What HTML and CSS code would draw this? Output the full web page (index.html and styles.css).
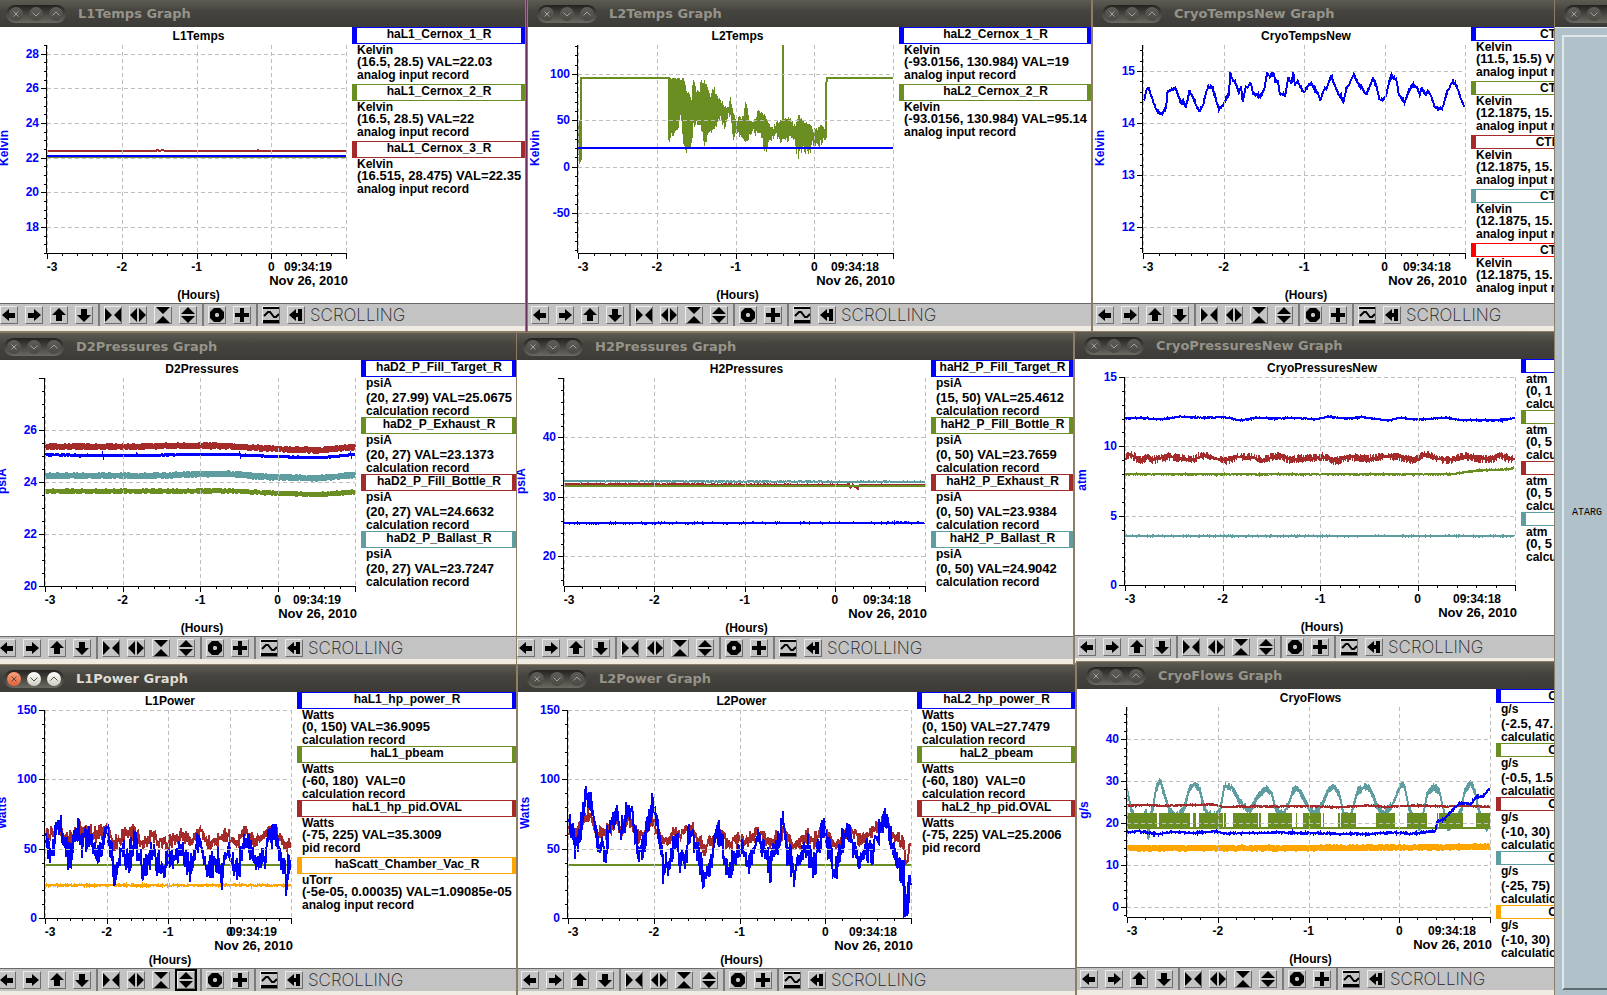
FILE: index.html
```html
<!DOCTYPE html>
<html lang="en">
<head>
    <meta charset="UTF-8">
    <meta name="viewport" content="width=device-width, initial-scale=1.0">
    <title>Target Graphs</title>
    <link rel="stylesheet" href="styles.css">
</head>
<body>
    <svg class="sprite" aria-hidden="true">
        <symbol id="left" viewBox="0 0 16 16"><path d="M1 8L8 2V6H14V11H8V14Z"/></symbol>
        <symbol id="right" viewBox="0 0 16 16"><path d="M15 8L8 2V6H2V11H8V14Z"/></symbol>
        <symbol id="up" viewBox="0 0 16 16"><path d="M8 1L15 8H11V14H5V8H1Z"/></symbol>
        <symbol id="down" viewBox="0 0 16 16"><path d="M8 15L15 8H11V2H5V8H1Z"/></symbol>
        <symbol id="squeeze-x" viewBox="0 0 16 16"><path d="M0 1L7 8L0 15ZM16 1L9 8L16 15Z"/></symbol>
        <symbol id="spread-x" viewBox="0 0 16 16"><path d="M7 1V15L0 8ZM9 1V15L16 8Z"/></symbol>
        <symbol id="squeeze-y" viewBox="0 0 16 16"><path d="M1 0H15L8 7ZM8 9L15 16H1Z"/></symbol>
        <symbol id="spread-y" viewBox="0 0 16 16"><path d="M8 0L15 7H1ZM1 9H15L8 16Z"/></symbol>
        <symbol id="ring" viewBox="0 0 16 16"><path fill-rule="evenodd" d="M5 1H11L15 5V11L11 15H5L1 11V5ZM7 6L6 7V9L7 10H9L10 9V7L9 6Z"/></symbol>
        <symbol id="plus" viewBox="0 0 16 16"><path d="M6 1H10V6H15V10H10V15H6V10H1V6H6Z"/></symbol>
        <symbol id="wave" viewBox="0 0 16 16"><path d="M0 0H16V2H0ZM0 13H16V16H0Z"/><path d="M1 9L5 5H7L11 10H13L16 7" fill="none" stroke="#000" stroke-width="2"/></symbol>
        <symbol id="end" viewBox="0 0 16 16"><path d="M1 8L8 2V6H10V2H14V14H10V10H8V14Z"/></symbol>
        <symbol id="close" viewBox="0 0 14 14"><path d="M4.500 4.500L9.500 9.500M9.500 4.500L4.500 9.500"/></symbol>
        <symbol id="minimize" viewBox="0 0 14 14"><path d="M3.500 5.500L7 9L10.500 5.500"/></symbol>
        <symbol id="maximize" viewBox="0 0 14 14"><path d="M3.500 8.500L7 5L10.500 8.500"/></symbol>
    </svg>

    <main class="desktop" id="desktop">
        <section class="window panel">
            <header class="titlebar">
                <div class="controls">
                    <button type="button" aria-label="Close"><svg><use href="#close"/></svg></button>
                    <button type="button" aria-label="Minimize"><svg><use href="#minimize"/></svg></button>
                    <button type="button" aria-label="Maximize"><svg><use href="#maximize"/></svg></button>
                </div>
            </header>
            <div class="panel-body">
                <div class="panel-frame">ATARG</div>
            </div>
        </section>
    </main>

    <script src="graphs.js"></script>
</body>
</html>
```
FILE: styles.css
```css
*{
    margin: 0;
    padding: 0;
    box-sizing: border-box;
}

body{
    overflow: hidden;
    background-color: #6b2f5b;
    font-family: "Liberation Sans", Arial, sans-serif;
    font-size: 12px;
    color: #000;
}

.sprite{
    display: none;
}

.desktop{
    position: relative;
    height: 100vh;
    overflow: hidden;
    background: linear-gradient(90deg, #6b2f5b 50%, #c98a96 68%);
}

/* windows */
.window{
    position: absolute;
    background-color: #efebe3;
    padding-bottom: 5px;
    box-shadow: 0 0 0 1px #8b7d66;
}

.l1temps{ left: -3px; top: 0; width: 528px; }
.l2temps{ left: 528px; top: 0; width: 563px; }
.cryotemps{ left: 1093px; top: 0; width: 531px; }
.d2pressures{ left: -5px; top: 333px; width: 521px; z-index: 2; }
.h2pressures{ left: 514px; top: 333px; width: 559px; }
.cryopressures{ left: 1075px; top: 332px; width: 545px; z-index: 2; }
.l1power{ left: -5px; top: 665px; width: 521px; z-index: 3; }
.l2power{ left: 518px; top: 665px; width: 557px; z-index: 2; }
.cryoflows{ left: 1077px; top: 662px; width: 531px; z-index: 2; }

.titlebar{
    display: flex;
    align-items: center;
    gap: 12px;
    height: 27px;
    padding-left: 9px;
    background: linear-gradient(#5d5b53, #45443f 40%, #3c3b37);
}

.titlebar h2{
    font-family: "DejaVu Sans", sans-serif;
    font-size: 13px;
    line-height: 16px;
    color: #969389;
    white-space: nowrap;
}

.controls{
    display: flex;
    gap: 6px;
    padding: 2px 3px;
    border-radius: 9px;
    background: linear-gradient(#23221f, #6a6962);
}

.controls button{
    width: 14px;
    height: 14px;
    border: 0;
    border-radius: 50%;
    background: linear-gradient(#5e5d57, #4a4944);
}

.controls svg{
    display: block;
    width: 14px;
    height: 14px;
    fill: none;
    stroke: #a3a199;
}

.active .titlebar h2{
    color: #dfdbd2;
}

.active .controls button{
    background: linear-gradient(#fff, #cfcbc2);
}

.active .controls button:first-child{
    background: linear-gradient(#f9a07c, #e2603a);
}

.active .controls svg{
    stroke: #5a4a40;
}

.content{
    display: flex;
    height: 276px;
    background-color: #fff;
}

.cryoflows .content{
    height: 278px;
}

/* chart */
.chart{
    flex: 1;
    min-width: 0;
    height: 100%;
}

.chart text{
    font-size: 12px;
    font-weight: bold;
    text-anchor: middle;
}

.chart .tick-y{
    fill: #0000ff;
    text-anchor: end;
}

.chart .unit{
    fill: #0000ff;
}

.chart .date{
    font-size: 13px;
    text-anchor: end;
}

.chart path{
    fill: none;
    stroke: #000;
    shape-rendering: crispEdges;
}

.chart .grid{
    stroke: #bebebe;
    stroke-dasharray: 4 3;
}

.chart .blue{ stroke: #0000ff; }
.chart .green{ stroke: #6b8e23; }
.chart .brown{ stroke: #a52a2a; }
.chart .teal{ stroke: #5f9ea0; }
.chart .orange{ stroke: #ffa500; }

/* legend */
.legend{
    flex: none;
    overflow: hidden;
    list-style: none;
    font-weight: bold;
    white-space: nowrap;
}

.l1temps .legend{ width: 173px; }
.l2temps .legend{ width: 192px; }
.cryotemps .legend{ width: 153px; }
.d2pressures .legend{ width: 155px; }
.h2pressures .legend{ width: 142px; }
.cryopressures .legend{ width: 99px; }
.l1power .legend{ width: 219px; }
.l2power .legend{ width: 158px; }
.cryoflows .legend{ width: 112px; }

.legend li{
    margin-bottom: 1px;
}

.legend h3{
    display: flex;
    justify-content: center;
    height: 17px;
    border: solid;
    border-width: 1px 4px 1px 5px;
    font-size: 12px;
    line-height: 12px;
}

.legend h3 span{
    color: #000;
}

.cryo .legend h3{
    height: 14px;
}

.legend p{
    height: 11px;
    padding-left: 5px;
    line-height: 12px;
}

.legend p.deep{
    height: 14px;
    line-height: 13px;
}

.legend .range{
    font-size: 13px;
    white-space: pre;
}

.legend .blue{ border-color: #0000ff; }
.legend .green{ border-color: #6b8e23; }
.legend .brown{ border-color: #a52a2a; }
.legend .teal{ border-color: #5f9ea0; }
.legend .orange{ border-color: #ffa500; }
.legend .red{ border-color: #ff0000; }

/* toolbar */
.toolbar{
    display: flex;
    align-items: center;
    height: 23px;
    border-top: 1px solid #696969;
    background-color: #c3c3c3;
}

.group{
    display: flex;
    align-items: center;
    gap: 7px;
    height: 22px;
    padding: 0 5px 0 4px;
    border-right: 2px solid #7a7a7a;
}

.group:first-child{
    padding-left: 3px;
}

.group:last-of-type{
    border-right: 0;
}

.group button{
    width: 18px;
    height: 18px;
    border: 1px solid;
    border-color: #ececec #6e6e6e #6e6e6e #ececec;
    background-color: #c3c3c3;
}

.group svg{
    display: block;
    width: 16px;
    height: 16px;
}

.active .spread-y{
    outline: 2px solid #000;
}

.mode{
    font-family: Inter, "Liberation Sans", sans-serif;
    font-size: 17px;
    font-weight: 200;
    color: #222;
}

/* target panel */
.panel{
    left: 1555px;
    right: -50px;
    top: 0;
    bottom: -4px;
    z-index: 5;
    display: flex;
    flex-direction: column;
    padding: 0;
    background-color: #b0c1c9;
}

.panel-body{
    flex: 1;
    display: flex;
    padding: 7px 0 9px 7px;
    border-top: 1px solid #e3eaee;
}

.panel-frame{
    flex: 1;
    display: flex;
    align-items: center;
    padding-left: 8px;
    border: solid;
    border-width: 2px 0 2px 2px;
    border-color: #dfe8ed #dfe8ed #5e6b70 #dfe8ed;
    font-family: "Liberation Mono", monospace;
    font-size: 10px;
}
```
FILE: graphs.js
```js
const tools = [
    ['left', 'right', 'up', 'down'],
    ['squeeze-x', 'spread-x', 'squeeze-y', 'spread-y'],
    ['ring', 'plus'],
    ['wave', 'end']
]

// box is the x, y, width, height that the trace points are recorded in
// a trace is color, line width, noise, points and, for a solid band, 'dense'
const graphs = [
    {
        id: 'l1temps', title: 'L1Temps', unit: 'Kelvin', time: '09:34:19',
        min: 16.5, max: 28.5, step: 2, minor: 4, labels: [28, 26, 24, 22, 20, 18],
        box: [140, 135, 886, 624],
        legend: [
            ['blue', 'haL1_Cernox_1_R', 'Kelvin', '(16.5, 28.5) VAL=22.03', 'analog input record'],
            ['green', 'haL1_Cernox_2_R', 'Kelvin', '(16.5, 28.5) VAL=22', 'analog input record'],
            ['brown', 'haL1_Cernox_3_R', 'Kelvin', '(16.515, 28.475) VAL=22.35', 'analog input record']
        ],
        traces: [
            ['green', 1, 1, '140,472 1026,472'],
            ['brown', 2, 0, '140,453 464,453 466,450 470,450 472,453 484,450 490,453 762,453 765,450 770,453 1026,453'],
            ['blue', 2, 0, '140,468 1026,468']
        ]
    },
    {
        id: 'l2temps', title: 'L2Temps', unit: 'Kelvin', time: '09:34:18',
        min: -93, max: 131, step: 50, minor: 5, labels: [100, 50, 0, -50],
        box: [159, 135, 859, 624],
        legend: [
            ['blue', 'haL2_Cernox_1_R', 'Kelvin', '(-93.0156, 130.984) VAL=19', 'analog input record'],
            ['green', 'haL2_Cernox_2_R', 'Kelvin', '(-93.0156, 130.984) VAL=95.14', 'analog input record']
        ],
        bands: [
            ['green', 12, '159,400,440 162,365,480 167,370,480 169,300,400 408,236,425 415,234,400 425,234,395 432,236,385 440,235,340 447,234,430 455,270,462 462,285,440 468,300,430 474,240,375 482,270,365 490,270,370 493,240,370 505,245,435 512,262,400 520,285,390 530,265,385 538,290,365 548,300,350 558,320,375 567,325,350 575,295,350 583,340,415 592,360,400 600,350,400 610,350,410 616,305,438 625,350,410 635,370,395 650,335,400 660,338,410 670,345,458 680,370,420 690,385,410 700,370,410 710,365,420 722,360,410 735,355,420 745,370,400 752,375,440 761,348,468 770,360,440 780,370,450 790,375,452 800,390,430 812,385,430 822,380,430 832,385,420', [169, 408]]
        ],
        traces: [
            ['green', 2, 0, '167,480 168,234 408,234 408,420'],
            ['green', 2, 0, '717,400 717,135'],
            ['green', 2, 0, '834,420 835,340 837,234 1018,234'],
            ['blue', 2, 0, '159,443 1018,443']
        ]
    },
    {
        id: 'cryotemps', cryo: true, title: 'CryoTempsNew', unit: 'Kelvin', time: '09:34:18',
        min: 11.5, max: 15.5, step: 1, minor: 5, labels: [15, 14, 13, 12],
        box: [176, 135, 965, 624],
        legend: [
            ['blue', 'CT', 'Kelvin', '(11.5, 15.5) V', 'analog input r'],
            ['green', 'CT', 'Kelvin', '(12.1875, 15.', 'analog input r'],
            ['brown', 'CTD', 'Kelvin', '(12.1875, 15.', 'analog input r'],
            ['teal', 'CT', 'Kelvin', '(12.1875, 15.', 'analog input r'],
            ['red', 'CT', 'Kelvin', '(12.1875, 15.', 'analog input r']
        ],
        traces: [
            ['blue', 2, 5, '178,305 188,265 195,270 205,300 215,325 225,340 235,340 245,320 250,275 262,270 275,265 288,305 298,305 305,320 315,275 325,290 335,315 345,332 355,318 365,280 372,260 385,262 392,290 402,325 415,320 428,290 434,285 437,215 445,240 452,245 463,275 470,262 475,305 483,262 492,262 498,245 506,280 515,285 528,290 540,265 548,218 556,230 567,218 572,245 580,240 586,285 594,280 602,285 612,235 620,250 626,218 632,255 640,245 650,265 660,275 668,262 680,248 690,265 700,280 708,300 718,270 728,260 740,225 750,255 762,285 770,290 776,308 785,270 797,245 808,222 820,250 832,262 844,285 855,260 865,235 875,255 885,300 895,300 905,285 915,240 922,228 935,240 943,285 960,308 973,270 985,255 997,262 1005,285 1012,265 1022,285 1030,275 1040,290 1050,320 1060,325 1072,325 1085,285 1095,260 1105,245 1117,260 1127,290 1138,318']
        ]
    },
    {
        id: 'd2pressures', title: 'D2Pressures', unit: 'psiA', time: '09:34:19',
        min: 20, max: 28, step: 2, minor: 4, labels: [26, 24, 22, 20],
        box: [134, 143, 918, 626],
        legend: [
            ['blue', 'haD2_P_Fill_Target_R', 'psiA', '(20, 27.99) VAL=25.0675', 'calculation record'],
            ['green', 'haD2_P_Exhaust_R', 'psiA', '(20, 27) VAL=23.1373', 'calculation record'],
            ['brown', 'haD2_P_Fill_Bottle_R', 'psiA', '(20, 27) VAL=24.6632', 'calculation record'],
            ['teal', 'haD2_P_Ballast_R', 'psiA', '(20, 27) VAL=23.7247', 'calculation record']
        ],
        traces: [
            ['brown', 2, 9, '134,350 300,350 400,350 500,347 600,347 680,348 740,352 850,358 940,361 1000,355 1052,351', 'dense'],
            ['blue', 2, 4, '134,374 400,377 560,373 690,373 800,379 950,383 1052,373', 'dense'],
            ['teal', 2, 9, '134,437 300,437 440,438 600,432 680,432 780,440 940,445 1052,435', 'dense'],
            ['green', 2, 7, '134,484 300,484 600,483 700,483 780,488 940,494 1052,486', 'dense']
        ]
    },
    {
        id: 'h2pressures', title: 'H2Pressures', unit: 'psiA', time: '09:34:18',
        min: 15, max: 50, step: 10, minor: 5, labels: [40, 30, 20],
        box: [148, 143, 985, 626],
        legend: [
            ['blue', 'haH2_P_Fill_Target_R', 'psiA', '(15, 50) VAL=25.4612', 'calculation record'],
            ['green', 'haH2_P_Fill_Bottle_R', 'psiA', '(0, 50) VAL=23.7659', 'calculation record'],
            ['brown', 'haH2_P_Exhaust_R', 'psiA', '(0, 50) VAL=23.9384', 'calculation record'],
            ['teal', 'haH2_P_Ballast_R', 'psiA', '(0, 50) VAL=24.9042', 'calculation record']
        ],
        traces: [
            ['teal', 2, 1, '148,454 1133,455'],
            ['brown', 2, 1, '148,463 925,464 930,474 936,464 950,477 954,465 1133,465'],
            ['green', 2, 0, '148,468 1133,469'],
            ['blue', 2, 2, '148,580 1133,579']
        ]
    },
    {
        id: 'cryopressures', cryo: true, title: 'CryoPressuresNew', unit: 'atm', time: '09:34:18',
        min: 0, max: 15, step: 5, minor: 5, labels: [15, 10, 5, 0],
        box: [163, 142, 1137, 624],
        legend: [
            ['blue', '', 'atm', '(0, 1', 'calcu'],
            ['green', '', 'atm', '(0, 5', 'calcu'],
            ['brown', '', 'atm', '(0, 5', 'calcu'],
            ['teal', '', 'atm', '(0, 5', 'calcu']
        ],
        traces: [
            ['blue', 2, 2, '163,267 200,264 270,269 320,261 390,264 450,262 500,272 550,264 600,267 650,264 720,269 755,261 810,267 855,262 930,273 965,264 1020,270 1100,264 1140,271 1250,272 1299,266'],
            ['brown', 2, 3, '163,382 178,372 195,385 218,392 228,378 238,392 290,380 320,385 360,390 395,377 430,388 460,392 490,382 530,382 565,392 610,377 640,388 680,388 720,385 750,382 773,394 825,380 870,390 910,380 960,380 1000,392 1042,374 1075,388 1120,390 1150,380 1230,390 1258,376 1280,388 1299,388', 'dense'],
            ['green', 2, 2, '163,434 1110,434 1190,423 1290,418 1299,411'],
            ['teal', 2, 2, '163,619 1299,619']
        ]
    },
    {
        id: 'l1power', active: true, title: 'L1Power', unit: 'Watts', time: '09:34:19',
        min: 0, max: 150, step: 50, minor: 5, labels: [150, 100, 50, 0],
        box: [134, 151, 729, 623],
        legend: [
            ['blue', 'haL1_hp_power_R', 'Watts', '(0, 150) VAL=36.9095', 'calculation record'],
            ['green', 'haL1_pbeam', 'Watts', '(-60, 180)  VAL=0', 'calculation record'],
            ['brown', 'haL1_hp_pid.OVAL', 'Watts', '(-75, 225) VAL=35.3009', 'pid record'],
            ['orange', 'haScatt_Chamber_Vac_R', 'uTorr', '(-5e-05, 0.00035) VAL=1.09085e-05', 'analog input record']
        ],
        traces: [
            ['green', 2, 0, '134,614 863,614'],
            ['orange', 2, 3, '134,676 863,676'],
            ['brown', 2, 30, '134,525 150,528 175,498 197,535 215,535 235,512 265,510 290,530 317,505 338,555 367,525 400,518 425,560 452,525 480,555 515,540 540,525 563,545 592,515 625,555 650,535 678,528 700,550 727,515 755,545 785,520 810,508 830,535 848,558 862,540'],
            ['blue', 2, 55, '134,540 150,580 160,560 175,492 190,535 197,580 212,590 225,530 235,515 245,565 255,530 265,515 278,550 290,590 305,550 317,510 328,560 338,630 345,620 355,600 367,560 380,610 390,570 400,545 412,590 425,640 435,630 452,560 465,600 480,630 500,600 515,605 530,590 540,565 552,610 563,635 575,580 590,540 605,590 620,635 640,590 658,640 668,590 678,560 690,600 705,635 725,540 740,570 755,615 785,590 800,530 815,520 830,590 840,620 848,660 855,620 862,610'],
            ['blue', 2, 0, '338,630 340,678 342,630'],
            ['blue', 2, 0, '656,640 658,690 661,640'],
            ['blue', 2, 0, '847,650 849,707 851,650']
        ]
    },
    {
        id: 'l2power', title: 'L2Power', unit: 'Watts', time: '09:34:18',
        min: 0, max: 150, step: 50, minor: 5, labels: [150, 100, 50, 0],
        box: [159, 151, 936, 623],
        legend: [
            ['blue', 'haL2_hp_power_R', 'Watts', '(0, 150) VAL=27.7479', 'calculation record'],
            ['green', 'haL2_pbeam', 'Watts', '(-60, 180)  VAL=0', 'calculation record'],
            ['brown', 'haL2_hp_pid.OVAL', 'Watts', '(-75, 225) VAL=25.2006', 'pid record']
        ],
        traces: [
            ['green', 2, 0, '159,614 1095,614'],
            ['brown', 2, 30, '159,505 180,528 212,458 242,525 262,525 290,485 305,515 325,472 350,525 370,525 388,475 420,555 450,520 500,508 530,565 555,540 570,508 600,560 630,535 655,540 678,515 710,555 745,515 780,560 812,525 830,550 852,508 870,520 890,565 922,510 955,540 990,520 1030,480 1045,520 1065,550 1076,540'],
            ['brown', 2, 4, '1076,540 1079,608 1086,605 1090,560 1095,552'],
            ['blue', 2, 55, '159,480 170,510 178,570 190,530 200,450 212,410 222,430 232,480 242,570 262,570 275,500 290,460 302,530 315,480 325,435 335,470 352,570 365,570 375,500 388,440 400,480 408,530 420,640 435,610 445,580 455,530 463,590 478,600 488,540 500,520 512,560 525,645 545,640 560,540 575,530 590,620 602,640 615,600 630,560 655,600 668,570 678,520 695,570 710,630 725,570 745,490 758,580 776,640 795,590 812,550 830,630 845,550 852,515 865,530 878,600 888,635 905,560 922,505 938,570 958,600 975,570 990,580 1005,520 1015,480 1030,480 1045,560 1055,590 1065,630 1074,600'],
            ['blue', 2, 0, '388,440 388,400'],
            ['blue', 3, 3, '1075,600 1077,765 1084,765 1086,700 1088,730 1090,645 1094,685']
        ]
    },
    {
        id: 'cryoflows', cryo: true, title: 'CryoFlows', unit: 'g/s', time: '09:34:18',
        min: -2.5, max: 47.7, step: 10, minor: 5, labels: [40, 30, 20, 10, 0],
        box: [167, 141, 1061, 631],
        legend: [
            ['blue', 'C', 'g/s', '(-2.5, 47.', 'calculatio'],
            ['green', 'C', 'g/s', '(-0.5, 1.5', 'calculatio'],
            ['brown', 'C', 'g/s', '(-10, 30)', 'calculatio'],
            ['teal', 'C', 'g/s', '(-25, 75)', 'calculatio'],
            ['orange', 'C', 'g/s', '(-10, 30)', 'calculatio']
        ],
        // beam-on intervals of the valve signal
        pulses: [[167, 254], [260, 350], [359, 368], [377, 447], [451, 455], [477, 550], [554, 558], [578, 648], [660, 665], [681, 733], [739, 744], [784, 788], [791, 835], [896, 951], [985, 1044], [1072, 1076], [1079, 1149], [1186, 1228]],
        traces: [
            ['teal', 2, 3, '167,385 180,450 190,480 215,480 222,450 230,535 236,460 243,450 252,385 264,360 275,400 290,450 310,470 333,450 350,385 364,372 378,385 392,440 405,465 425,465 440,450 452,378 475,384 500,430 525,455 548,410 572,385 590,400 602,450 625,462 640,430 652,395 663,382 675,400 695,440 715,460 735,440 755,390 772,380 790,410 800,465 820,470 840,395 868,378 882,395 900,445 920,462 945,430 968,372 978,380 990,440 1010,490 1025,505 1045,400 1065,380 1080,395 1092,450 1105,510 1125,480 1145,450 1152,400 1172,368 1185,400 1195,450 1215,505 1227,490', 'dense'],
            ['brown', 2, 2, '167,438 220,435 260,438 420,434 450,442 500,440 700,439 780,442 870,437 920,441 1000,437 1100,440 1160,438 1228,441'],
            ['blue', 2, 3, '167,517 200,514 255,524 300,516 360,520 420,515 450,521 600,518 700,520 870,523 940,518 1000,522 1050,516 1068,515 1073,487 1095,477 1115,455 1140,430 1172,432 1188,412 1210,408 1227,385'],
            ['orange', 2, 9, '167,565 700,565 1000,563 1228,561', 'dense']
        ]
    }
]

// small seeded generator, so the noise is the same on every load
let seed = 26112010
function random(){
    seed = (seed * 1103515245 + 12345) % 2147483648
    return seed / 2147483648
}

function parse(text){
    return text.split(' ').map(point => point.split(',').map(Number))
}

class Chart{
    constructor(graph, width, height) {
        this.graph = graph
        this.left = 50
        this.right = width - 6
        this.top = 18
        this.bottom = height - 50
        this.parts = []
    }

    x(value){
        const [x, , w] = this.graph.box
        return this.left + (value - x) / w * (this.right - this.left)
    }

    y(value){
        const [, y, , h] = this.graph.box
        return this.top + (value - y) / h * (this.bottom - this.top)
    }

    level(value){
        const { min, max } = this.graph
        return Math.round(this.bottom - (value - min) / (max - min) * (this.bottom - this.top))
    }

    path(name, d, width = 1){
        this.parts.push(`<path class="${name}" stroke-width="${width}" d="${d}"/>`)
    }

    text(name, x, y, value, extra = ''){
        this.parts.push(`<text class="${name}" x="${x}" y="${y}" ${extra}>${value}</text>`)
    }

    trace([color, width, noise, text, dense]){
        const points = parse(text)
        if(!noise){
            this.path(color, 'M' + points.map(([x, y]) => `${this.x(x).toFixed(1)} ${this.y(y).toFixed(1)}`).join('L'), width)
            return
        }
        const out = []
        let side = 1
        for(let i = 1; i < points.length; i++){
            const [x0, y0] = points[i - 1]
            const [x1, y1] = points[i]
            for(let x = x0; x < x1; x += 1.5){
                const y = y0 + (y1 - y0) * (x - x0) / (x1 - x0)
                side = -side
                const jitter = dense ? side * noise * (0.7 + random() * 0.5) : (random() + random() - 1) * noise
                out.push(`${this.x(x).toFixed(1)} ${Math.min(this.bottom - 1, this.y(y + jitter)).toFixed(1)}`)
            }
        }
        this.path(color, 'M' + out.join('L'), width)
    }

    band([color, noise, text, [skipFrom, skipTo]]){
        const points = parse(text)
        let d = ''
        for(let i = 1; i < points.length; i++){
            const [x0, top0, low0] = points[i - 1]
            const [x1, top1, low1] = points[i]
            if(x0 >= skipFrom && x1 <= skipTo) continue
            for(let x = x0; x < x1; x += 2){
                const k = (x - x0) / (x1 - x0)
                const top = Math.max(234, top0 + (top1 - top0) * k + (random() - 0.5) * noise)
                const low = low0 + (low1 - low0) * k + (random() - 0.5) * noise * 2
                d += `M${this.x(x).toFixed(1)} ${this.y(top).toFixed(1)}V${this.y(low).toFixed(1)}`
            }
        }
        this.path(color, d, 1)
    }

    drawPulses(){
        const top = this.y(459)
        const low = this.y(506)
        this.path('green', `M${this.left} ${this.y(504)}H${this.right}`, 2)
        this.graph.pulses.forEach(([from, to]) => {
            const y = (top + low) / 2
            this.path('green', `M${this.x(from).toFixed(1)} ${y}H${this.x(to).toFixed(1)}`, Math.round(low - top))
        })
    }

    drawGrid(){
        let d = ''
        this.graph.labels.forEach(value => {
            d += `M${this.left} ${this.level(value) + 0.5}H${this.right}`
        })
        for(let i = 0; i < 5; i++){
            const x = Math.round(this.left + (this.right - this.left) * i / 4) + 0.5
            d += `M${x} ${this.top}V${this.bottom}`
        }
        this.path('grid', d)
    }

    drawAxes(){
        const { min, max, step, minor, labels, title, unit, time } = this.graph
        const width = this.right - this.left
        let d = `M${this.left - 0.5} ${this.top}V${this.bottom}M${this.left} ${this.bottom + 0.5}H${this.right + 1}`
        for(let i = 0; i <= 20; i++){
            const x = Math.round(this.left + width * i / 20) + 0.5
            d += `M${x} ${this.bottom}v${i % 5 ? 3 : 6}`
        }
        const small = step / minor
        for(let n = Math.ceil(min / small); n * small <= max; n++){
            d += `M${this.left - (n % minor ? 3 : 6)} ${this.level(n * small) + 0.5}H${this.left}`
        }
        this.path('axis', d)

        labels.forEach(value => this.text('tick-y', this.left - 8, this.level(value) + 4, value))
        const middle = (this.left + this.right) / 2
        const row = this.bottom + 18
        this.text('', this.left + 5, row, '-3')
        this.text('', this.left + width / 4, row, '-2')
        this.text('', middle, row, '-1')
        this.text('', this.left + width * 3 / 4, row, '0')
        this.text('', this.right - 38, row, time)
        this.text('date', this.right + 2, row + 14, 'Nov 26, 2010')
        this.text('', middle + 2, row + 28, '(Hours)')
        this.text('', middle + 2, 13, title)
        this.text('unit', 0, 0, unit, 'transform="translate(11 121) rotate(-90)"')
    }

    render(){
        const { traces, bands = [], pulses } = this.graph
        bands.forEach(band => this.band(band))
        traces.forEach((trace, index) => {
            this.trace(trace)
            if(pulses && index === 0) this.drawPulses()
        })
        this.drawGrid()
        this.drawAxes()
        return this.parts.join('')
    }
}

function line(text, name = ''){
    const deep = /[gjpqy(]/.test(text) ? 'deep' : ''
    return `<p class="${name} ${deep}">${text}</p>`
}

function createWindow(graph){
    const controls = ['close', 'minimize', 'maximize']
        .map(name => `<button type="button" aria-label="${name}"><svg><use href="#${name}"/></svg></button>`).join('')
    const legend = graph.legend
        .map(([color, name, unit, range, record]) => `<li><h3 class="${color}"><span>${name}</span></h3>${line(unit)}${line(range, 'range')}${line(record)}</li>`).join('')
    const toolbar = tools
        .map(group => `<div class="group">${group.map(name => `<button type="button" class="${name}" aria-label="${name}"><svg><use href="#${name}"/></svg></button>`).join('')}</div>`).join('')

    const element = document.createElement('section')
    element.className = `window ${graph.id} ${graph.cryo ? 'cryo' : ''} ${graph.active ? 'active' : ''}`
    element.innerHTML = `
        <header class="titlebar"><div class="controls">${controls}</div><h2>${graph.title} Graph</h2></header>
        <div class="content"><svg class="chart"></svg><ul class="legend">${legend}</ul></div>
        <footer class="toolbar">${toolbar}<span class="mode">SCROLLING</span></footer>`
    return element
}

function drawChart(graph, element){
    const svg = element.querySelector('.chart')
    const { width, height } = svg.getBoundingClientRect()
    svg.innerHTML = new Chart(graph, width, height).render()
}

const desktop = document.querySelector('#desktop')

graphs.forEach(graph => {
    const element = createWindow(graph)
    desktop.appendChild(element)
    drawChart(graph, element)
})
```
